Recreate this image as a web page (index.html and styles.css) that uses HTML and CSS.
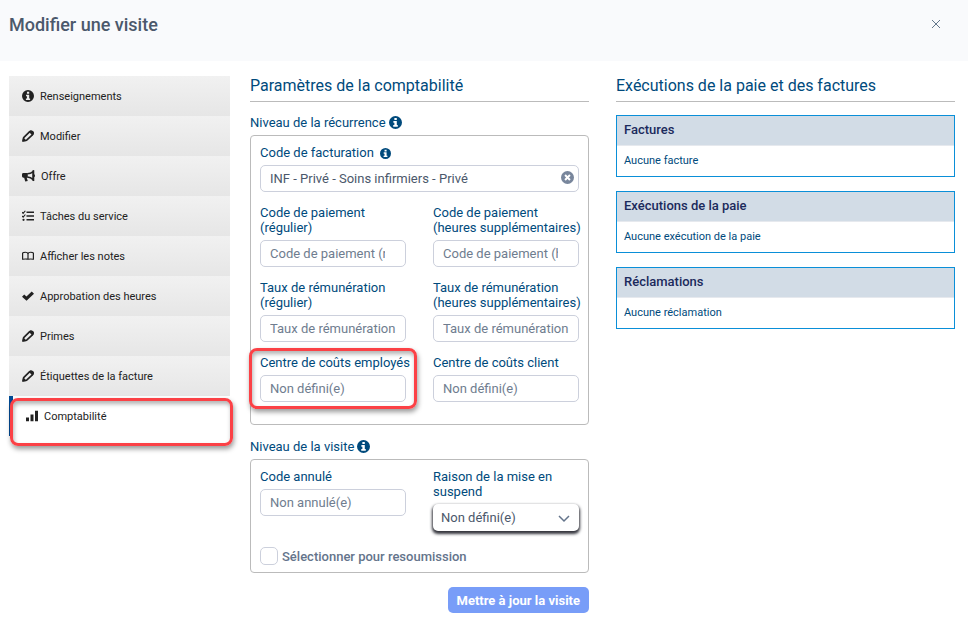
FILE: index.html
```html
<!DOCTYPE html>
<html lang="fr">
<head>
    <meta charset="UTF-8">
    <meta name="viewport" content="width=device-width, initial-scale=1.0">
    <title>Modifier une visite</title>
    <link rel="stylesheet" href="styles.css">
</head>
<body>
    <!-- shared icons -->
    <svg class="icon-defs" aria-hidden="true">
        <symbol id="icon-info" viewBox="0 0 16 16">
            <path fill-rule="evenodd" d="M8 0a8 8 0 1 0 0 16A8 8 0 0 0 8 0zM6.6 2.4h3v2.6h-3zM5.4 6.2h4.200v5h1.200v2H5.200v-2h1.400V8.200H5.400z"/>
        </symbol>
        <symbol id="icon-pencil" viewBox="0 0 16 16">
            <path d="M1.4 14.4l.8-4.2 7.4-7.4q2-2 4-.2t.2 4L6.2 13.6z" fill="none" stroke="currentColor" stroke-width="2.2" stroke-linejoin="round"/>
            <path d="M.4 15.6l1.1-6 5 5zM9 2.400l2-1.600q2.500-.8 4 1t.5 3.400l-1.600 2z"/>
        </symbol>
    </svg>

    <header class="modal-header">
        <h1>Modifier une visite</h1>
        <button type="button" class="close-btn" aria-label="Fermer">
            <svg viewBox="0 0 10 10"><path d="M1 1l8 8M9 1L1 9" fill="none" stroke="currentColor"/></svg>
        </button>
    </header>

    <div class="modal-body">
        <nav class="sidebar">
            <a href="#renseignements"><svg class="icon"><use href="#icon-info"/></svg>Renseignements</a>
            <a href="#modifier"><svg class="icon"><use href="#icon-pencil"/></svg>Modifier</a>
            <a href="#offre">
                <svg class="icon icon-wide" viewBox="0 0 18 16">
                    <path d="M2 4h6v6.5H6.5L8 15l-3.500.5L3 10.500H2q-2 0-2-2V6q0-2 2-2z"/>
                    <path d="M7.5 5q4.500 0 8-3v11q-3.500-3-8-3.500" fill="none" stroke="currentColor" stroke-width="2"/>
                    <path d="M14.5 0H17v5.500q1 .5 1 2t-1 2V15h-2.500z"/>
                </svg>Offre
            </a>
            <a href="#taches">
                <svg class="icon" viewBox="0 0 16 16">
                    <path d="M6 3h10M6 8h10M6 13h10" stroke="currentColor" stroke-width="2"/>
                    <path d="M0 3l1.5 1.5 3-3.500M0 8l1.500 1.500 3-3.500" fill="none" stroke="currentColor" stroke-width="1.5"/>
                    <circle cx="2" cy="13" r="1.5"/>
                </svg>Tâches du service
            </a>
            <a href="#notes">
                <svg class="icon" viewBox="0 0 16 16">
                    <path d="M8 13V5q-.5-2-3.500-2T.8 4v9q0-1 3.700-1T8 13q0-1 3.500-1t3.700 1V4q-.7-1-3.700-1T8 5" fill="none" stroke="currentColor" stroke-width="1.6"/>
                </svg>Afficher les notes
            </a>
            <a href="#heures">
                <svg class="icon" viewBox="0 0 16 16">
                    <path d="M1.500 7.500l4.500 4 8.500-8" fill="none" stroke="currentColor" stroke-width="4.400"/>
                </svg>Approbation des heures
            </a>
            <a href="#primes"><svg class="icon"><use href="#icon-pencil"/></svg>Primes</a>
            <a href="#etiquettes"><svg class="icon"><use href="#icon-pencil"/></svg>Étiquettes de la facture</a>
            <a href="#comptabilite" class="active highlight">
                <svg class="icon" viewBox="0 0 16 16">
                    <path d="M0 10h4v5H0zM6 6h4v9H6zM12 1h4v14h-4z"/>
                </svg>Comptabilité
            </a>
        </nav>

        <main class="content">
            <form class="settings">
                <h2>Paramètres de la comptabilité</h2>

                <h3>Niveau de la récurrence <svg class="info"><use href="#icon-info"/></svg></h3>
                <div class="box box-recurrence">
                    <div class="field field-full">
                        <label for="billing">Code de facturation <svg class="info info-small"><use href="#icon-info"/></svg></label>
                        <div class="clearable">
                            <input type="text" id="billing" value="INF - Privé - Soins infirmiers - Privé">
                            <button type="button" class="clear-btn" aria-label="Effacer">
                                <svg viewBox="0 0 16 16"><circle cx="8" cy="8" r="8"/><path d="M5 5l6 6M11 5l-6 6" stroke="#fff" stroke-width="2.4"/></svg>
                            </button>
                        </div>
                    </div>
                    <div class="field">
                        <label for="payCode">Code de paiement<br>(régulier)</label>
                        <input type="text" id="payCode" class="lookup" placeholder="Code de paiement (régulier)">
                    </div>
                    <div class="field">
                        <label for="payCodeOt">Code de paiement<br>(heures supplémentaires)</label>
                        <input type="text" id="payCodeOt" class="lookup" placeholder="Code de paiement (heures supplémentaires)">
                    </div>
                    <div class="field">
                        <label for="payRate">Taux de rémunération<br>(régulier)</label>
                        <input type="text" id="payRate" placeholder="Taux de rémunération">
                    </div>
                    <div class="field">
                        <label for="payRateOt">Taux de rémunération<br>(heures supplémentaires)</label>
                        <input type="text" id="payRateOt" placeholder="Taux de rémunération">
                    </div>
                    <div class="field highlight">
                        <label for="employeeCenter">Centre de coûts employés</label>
                        <input type="text" id="employeeCenter" placeholder="Non défini(e)">
                    </div>
                    <div class="field">
                        <label for="clientCenter">Centre de coûts client</label>
                        <input type="text" id="clientCenter" placeholder="Non défini(e)">
                    </div>
                </div>

                <h3>Niveau de la visite <svg class="info"><use href="#icon-info"/></svg></h3>
                <div class="box box-visit">
                    <div class="field">
                        <label for="cancelCode">Code annulé</label>
                        <input type="text" id="cancelCode" placeholder="Non annulé(e)">
                    </div>
                    <div class="field">
                        <label for="holdReason">Raison de la mise en<br>suspend</label>
                        <div class="select-wrap">
                            <select id="holdReason">
                                <option>Non défini(e)</option>
                            </select>
                            <svg class="chevron" viewBox="0 0 12 8"><path d="M1 1l5 5 5-5" fill="none" stroke="currentColor" stroke-width="1.5"/></svg>
                        </div>
                    </div>
                    <label class="checkbox field-full"><input type="checkbox">Sélectionner pour resoumission</label>
                </div>

                <button type="submit" class="submit-btn">Mettre à jour la visite</button>
            </form>

            <section class="runs">
                <h2>Exécutions de la paie et des factures</h2>
                <table>
                    <thead><tr><th>Factures</th></tr></thead>
                    <tbody><tr><td>Aucune facture</td></tr></tbody>
                </table>
                <table>
                    <thead><tr><th>Exécutions de la paie</th></tr></thead>
                    <tbody><tr><td>Aucune exécution de la paie</td></tr></tbody>
                </table>
                <table>
                    <thead><tr><th>Réclamations</th></tr></thead>
                    <tbody><tr><td>Aucune réclamation</td></tr></tbody>
                </table>
            </section>
        </main>
    </div>
</body>
</html>
```
FILE: styles.css
```css
* {
    box-sizing: border-box;
}
body {
    margin: 0;
    background: #fff;
    color: #004a7c;
    font-family: Roboto, Arial, sans-serif;
    font-size: 13px;
    line-height: 15px;
}
svg {
    fill: currentColor;
}
button,
input,
select {
    font: inherit;
}
.icon-defs {
    display: none;
}

/* header */
.modal-header {
    display: flex;
    justify-content: space-between;
    padding: 14px 27px 25px 9px;
    background: #f9fafc;
}
.modal-header h1 {
    margin: 0;
    color: #4b586b;
    font-size: 18px;
    font-weight: 500;
    line-height: 22px;
}
.close-btn {
    display: flex;
    align-items: center;
    height: 20px;
    padding: 0;
    border: none;
    background: none;
    color: #64788c;
}
.close-btn svg {
    width: 10px;
    height: 10px;
}

.modal-body {
    display: grid;
    grid-template-columns: 221px 1fr;
    align-items: start;
    gap: 20px;
    padding: 15px 13px 10px 9px;
}

/* sidebar */
.sidebar a {
    display: flex;
    align-items: center;
    gap: 6px;
    height: 40px;
    padding: 0 13px;
    background: linear-gradient(#f1f1f1, #e6e6e6);
    color: #222;
    font-size: 11px;
    text-decoration: none;
}
.sidebar a.active {
    border-left: 4px solid #004a94;
    background: #fff;
}
.icon {
    width: 12px;
    height: 12px;
}
.icon-wide {
    width: 13px;
}

/* red callout around an element */
.highlight {
    position: relative;
}
.highlight::after {
    content: "";
    position: absolute;
    inset: -7px -11px;
    border: 3px solid #fb4146;
    border-radius: 8px;
    box-shadow: 1px 3px 5px rgba(0, 0, 0, 0.4), inset 1px 3px 4px rgba(0, 0, 0, 0.3);
    pointer-events: none;
}
.sidebar .highlight::after {
    inset: 2px -3px -10px -3px;
}

/* content */
.content {
    display: grid;
    grid-template-columns: 1fr 1fr;
    align-items: start;
    gap: 27px;
}
h2 {
    margin: 0 0 13px;
    padding-bottom: 6px;
    border-bottom: 1px solid #bbb;
    font-size: 16px;
    font-weight: 400;
    line-height: 19px;
}
h3 {
    display: flex;
    align-items: center;
    gap: 3px;
    margin: 0 0 5px;
    font-size: 13px;
    font-weight: 400;
}
.info {
    width: 13px;
    height: 13px;
}
.info-small {
    width: 11px;
    height: 11px;
    margin-left: 3px;
    vertical-align: -2px;
}
.settings {
    display: flex;
    flex-direction: column;
}
.box {
    display: grid;
    grid-template-columns: 1fr 1fr;
    gap: 13px 27px;
    margin-bottom: 14px;
    padding: 9px 9px 7px;
    border: 1px solid #bbb;
    border-radius: 4px;
}
.box-recurrence {
    padding-bottom: 22px;
}
.box-visit {
    row-gap: 16px;
}
.field {
    display: flex;
    flex-direction: column;
    gap: 5px;
    min-width: 0;
    white-space: nowrap;
}
.field-full {
    grid-column: 1 / -1;
}
.field input,
.field select {
    width: 100%;
    height: 27px;
    padding: 0 9px;
    border: 1px solid #ccd0dc;
    border-radius: 5px;
    background: #fff;
    color: #4b586b;
}
.field input.lookup {
    padding-right: 20px;
}
.field input::placeholder {
    color: #6f7d8f;
    opacity: 1;
}
.clearable,
.select-wrap {
    position: relative;
}
.clear-btn {
    position: absolute;
    top: 6px;
    right: 5px;
    display: flex;
    padding: 0;
    border: none;
    background: none;
    color: #78869c;
}
.clear-btn svg {
    width: 13px;
    height: 13px;
}
.field select {
    padding: 0 8px;
    border: none;
    appearance: none;
    box-shadow: 0 2px 3px 1px #33343c;
}
.chevron {
    position: absolute;
    top: 11px;
    right: 9px;
    width: 12px;
    height: 8px;
    color: #64748b;
    pointer-events: none;
}
.checkbox {
    display: flex;
    align-items: center;
    gap: 4px;
    color: #64748b;
    font-weight: 500;
}
.checkbox input {
    width: 18px;
    height: 18px;
    margin: 0;
    border: 1px solid #ccd0dc;
    border-radius: 5px;
    appearance: none;
}
.submit-btn {
    align-self: flex-end;
    height: 26px;
    padding: 0 9px;
    border: none;
    border-radius: 5px;
    background: #789df8;
    color: #fff;
    font-weight: 700;
}

/* payroll and invoice runs */
.runs table {
    width: 100%;
    margin-bottom: 14px;
    border: 1px solid #0a8fd8;
    border-spacing: 0;
}
.runs th,
.runs td {
    height: 30px;
    padding: 0 7px 2px;
    text-align: left;
}
.runs th {
    border-bottom: 1px solid #e6e9ee;
    background: #d2dce6;
    color: #1b2a5c;
    font-size: 13px;
    font-weight: 500;
}
.runs td {
    font-size: 11px;
}
```
